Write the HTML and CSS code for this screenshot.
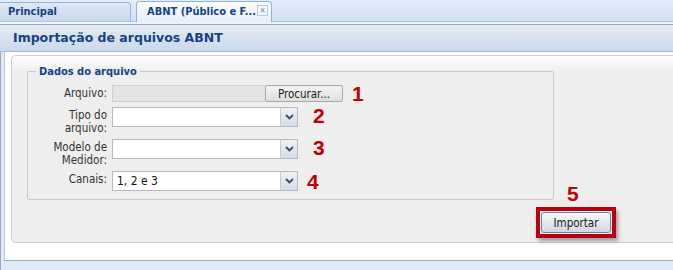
FILE: index.html
```html
<!DOCTYPE html>
<html lang="pt-BR">
<head>
    <meta charset="UTF-8">
    <title>Importação de arquivos ABNT</title>
    <link rel="stylesheet" href="styles.css">
</head>
<body>
    <div class="tabbar">
        <div class="tab">Principal</div>
        <div class="tab active">ABNT (Público e F...<span class="tab-close">&#x2715;</span></div>
    </div>
    <div class="tabstrip-line"></div>

    <div class="panel-header">Importação de arquivos ABNT</div>

    <div class="frame">
        <div class="panel-body">
            <div class="form-box">
                <fieldset class="group">
                    <legend>Dados do arquivo</legend>

                    <div class="row row-file">
                        <label>Arquivo:</label>
                        <div class="file-input"></div>
                        <button class="btn-browse">Procurar...</button>
                        <span class="mark mark-1">1</span>
                    </div>

                    <div class="row">
                        <label>Tipo do<br>arquivo:</label>
                        <div class="combo">
                            <span class="combo-text"></span>
                            <span class="combo-trigger"><svg width="9" height="6" viewBox="0 0 9 6"><path d="M1 1 L4.5 4.5 L8 1" fill="none" stroke="#2a4f86" stroke-width="1.8"/></svg></span>
                        </div>
                        <span class="mark">2</span>
                    </div>

                    <div class="row">
                        <label>Modelo de<br>Medidor:</label>
                        <div class="combo">
                            <span class="combo-text"></span>
                            <span class="combo-trigger"><svg width="9" height="6" viewBox="0 0 9 6"><path d="M1 1 L4.5 4.5 L8 1" fill="none" stroke="#2a4f86" stroke-width="1.8"/></svg></span>
                        </div>
                        <span class="mark">3</span>
                    </div>

                    <div class="row row-last">
                        <label>Canais:</label>
                        <div class="combo">
                            <span class="combo-text">1, 2 e 3</span>
                            <span class="combo-trigger"><svg width="9" height="6" viewBox="0 0 9 6"><path d="M1 1 L4.5 4.5 L8 1" fill="none" stroke="#2a4f86" stroke-width="1.8"/></svg></span>
                        </div>
                        <span class="mark mark-4">4</span>
                    </div>
                </fieldset>

                <div class="actions">
                    <div class="highlight">
                        <span class="mark mark-5">5</span>
                        <button class="btn-import">Importar</button>
                    </div>
                </div>
            </div>
        </div>
    </div>
</body>
</html>
```

FILE: styles.css
```css
body {
    margin: 0;
    width: 673px;
    height: 270px;
    overflow: hidden;
    background-color: #dfe8f6;
    font-family: "DejaVu Sans Condensed", "DejaVu Sans", sans-serif;
    font-stretch: condensed;
    font-size: 11px;
    color: #222;
}
.tabbar {
    height: 21px;
    display: flex;
    align-items: flex-end;
    gap: 5px;
    background: linear-gradient(#e3ecf9, #d3e1f4);
    border-bottom: 1px solid #a9c5e8;
}
.tab {
    height: 18px;
    line-height: 18px;
    padding: 0 8px;
    width: 114px;
    font-weight: bold;
    color: #15428b;
    background: linear-gradient(#e0e9f5, #c8d8ee);
    border: 1px solid #8db2e3;
    border-bottom: none;
    border-left: none;
    border-radius: 0 4px 0 0;
}
.tab.active {
    height: 20px;
    line-height: 20px;
    width: 116px;
    padding: 0 8px 0 10px;
    background: linear-gradient(#fbfcfe, #e6eef8);
    border-left: 1px solid #8db2e3;
    border-radius: 4px 4px 0 0;
    margin-bottom: -1px;
    position: relative;
}
.tab-close {
    position: absolute;
    right: 3px;
    top: 3px;
    width: 9px;
    height: 9px;
    line-height: 9px;
    font-size: 8px;
    text-align: center;
    color: #7a8aa0;
    border: 1px solid #b8c6d8;
    font-weight: normal;
}
.tabstrip-line {
    height: 2px;
    background: #eef3fa;
    border-bottom: 1px solid #99a9bd;
}
.panel-header {
    height: 26px;
    line-height: 26px;
    padding-left: 13px;
    font-family: "DejaVu Sans", sans-serif;
    font-stretch: normal;
    font-size: 12.5px;
    font-weight: bold;
    color: #15428b;
    background: linear-gradient(#e6ebf3, #c9d9eb);
    border-bottom: 1px solid #99bbe8;
}
.frame {
    border-left: 1px solid #99aac0;
    padding-left: 3px;
    height: 218px;
    background-color: #dfe8f6;
}
.panel-body {
    background-color: #fff;
    border-left: 1px solid #b8cbe4;
    border-bottom: 1px solid #99aac0;
    padding: 3px 0 17px 6px;
}
.form-box {
    height: 177px;
    border: 1px solid #cfcfcf;
    border-right: none;
    border-radius: 5px 0 0 5px;
    background: linear-gradient(#ffffff, #eeeeee 16px, #eeeeee);
    padding-top: 9px;
}
.group {
    width: 510px;
    margin: 0 0 0 15px;
    padding: 7px 8px 7px 7px;
    border: 1px solid #c8c8c8;
    border-radius: 2px;
}
.group legend {
    padding: 0 3px;
    margin-left: 1px;
    font-weight: bold;
    color: #15428b;
}
.row {
    display: flex;
    align-items: flex-start;
    margin-bottom: 4px;
}
.row-file {
    min-height: 17px;
    margin-bottom: 3px;
}
.row-last {
    margin-bottom: 0;
}
.row label {
    width: 72px;
    padding-top: 2px;
    padding-right: 5px;
    text-align: right;
    line-height: 13px;
    font-size: 11.5px;
    color: #333;
}
.file-input {
    width: 152px;
    height: 15px;
    background-color: #e4e4e4;
    border: 1px solid #d0d0d0;
    border-right: none;
}
.btn-browse {
    width: 78px;
    height: 17px;
    padding: 0;
    font-family: inherit;
    font-stretch: inherit;
    font-size: 11.5px;
    color: #222;
    background: linear-gradient(#f4f4f4, #dedede);
    border: 1px solid #a9a9a9;
    border-radius: 2px;
}
.combo {
    display: flex;
    width: 184px;
    height: 18px;
    border: 1px solid #b5b8c8;
    background-color: #fff;
}
.combo-text {
    flex: 1;
    padding: 2px 4px;
    font-size: 12px;
    line-height: 15px;
    color: #111;
}
.combo-trigger {
    width: 16px;
    display: flex;
    align-items: center;
    justify-content: center;
    background: linear-gradient(#eef1f5, #d6dce4);
    border-left: 1px solid #c4cad4;
}
.mark {
    margin-left: 15px;
    margin-top: -2px;
    font-family: "Liberation Sans", Arial, sans-serif;
    font-stretch: normal;
    font-weight: bold;
    font-size: 21px;
    line-height: 21px;
    color: #c00000;
}
.mark-1 {
    margin-left: 9px;
}
.mark-4 {
    margin-left: 9px;
    margin-top: 0;
}
.actions {
    display: flex;
    padding-left: 524px;
    margin-top: 7px;
}
.highlight {
    position: relative;
    border: 4px solid #b80012;
    padding: 1px;
    box-shadow: 2px 3px 4px rgba(0, 0, 0, 0.35);
}
.mark-5 {
    position: absolute;
    left: 27px;
    top: -28px;
    margin: 0;
}
.btn-import {
    display: block;
    width: 70px;
    height: 21px;
    padding: 0;
    font-family: inherit;
    font-stretch: inherit;
    font-size: 11.5px;
    color: #222;
    background: linear-gradient(#f6f7f9, #e4e7ec 50%, #d4d8de);
    border: 1px solid #6f839c;
    border-radius: 3px;
}
```
